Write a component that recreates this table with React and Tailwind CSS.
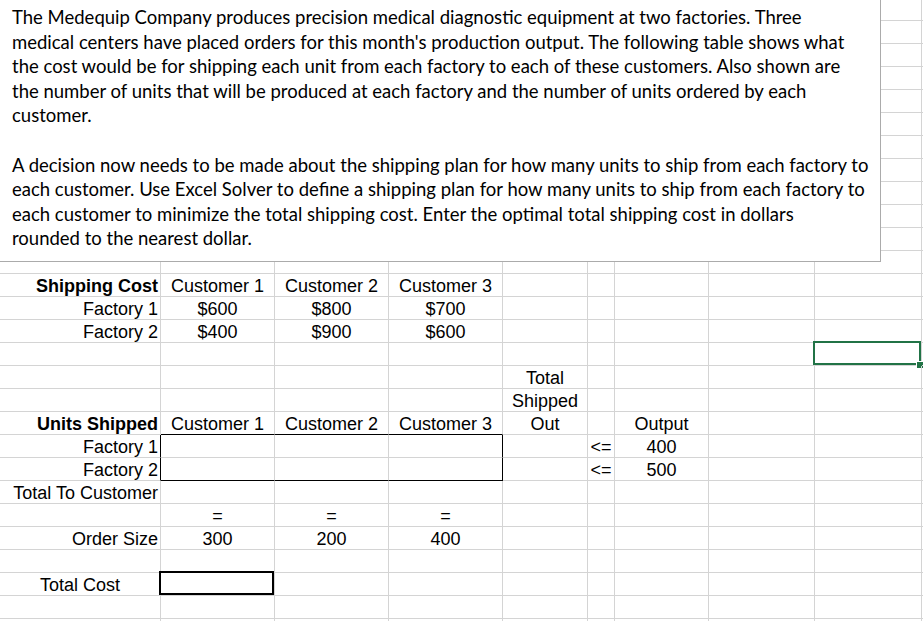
import React from 'react';

const ROWS = 28;
const NCOLS = 10;

const PROBLEM = [
  'The Medequip Company produces precision medical diagnostic equipment at two factories. Three',
  "medical centers have placed orders for this month's production output. The following table shows what",
  'the cost would be for shipping each unit from each factory to each of these customers. Also shown are',
  'the number of units that will be produced at each factory and the number of units ordered by each',
  'customer.',
  '',
  'A decision now needs to be made about the shipping plan for how many units to ship from each factory to',
  'each customer. Use Excel Solver to define a shipping plan for how many units to ship from each factory to',
  'each customer to minimize the total shipping cost. Enter the optimal total shipping cost in dollars',
  'rounded to the nearest dollar.',
];

// row -> { col: [text, align, bold] }
const CELLS = {
  12: { 0: ['Shipping Cost', 'r', true], 1: ['Customer 1', 'c'], 2: ['Customer 2', 'c'], 3: ['Customer 3', 'c'] },
  13: { 0: ['Factory 1', 'r'], 1: ['$600', 'c'], 2: ['$800', 'c'], 3: ['$700', 'c'] },
  14: { 0: ['Factory 2', 'r'], 1: ['$400', 'c'], 2: ['$900', 'c'], 3: ['$600', 'c'] },
  16: { 4: ['Total', 'c'] },
  17: { 4: ['Shipped', 'c'] },
  18: { 0: ['Units Shipped', 'r', true], 1: ['Customer 1', 'c'], 2: ['Customer 2', 'c'], 3: ['Customer 3', 'c'], 4: ['Out', 'c'], 6: ['Output', 'c'] },
  19: { 0: ['Factory 1', 'r'], 5: ['<=', 'c'], 6: ['400', 'c'] },
  20: { 0: ['Factory 2', 'r'], 5: ['<=', 'c'], 6: ['500', 'c'] },
  21: { 0: ['Total To Customer', 'r'] },
  22: { 1: ['=', 'c'], 2: ['=', 'c'], 3: ['=', 'c'] },
  23: { 0: ['Order Size', 'r'], 1: ['300', 'c'], 2: ['200', 'c'], 3: ['400', 'c'] },
  25: { 0: ['Total Cost', 'c'] },
};

// black outline round the units shipped block (B19:D20)
const blackRight = new Set(['19-0', '20-0', '19-3', '20-3']);
const blackBottom = new Set(['18-1', '18-2', '18-3', '20-1', '20-2', '20-3']);

function Cell({ r, c }) {
  const key = `${r}-${c}`;
  const data = CELLS[r]?.[c];
  const rightCls = blackRight.has(key) ? 'border-r-black' : 'border-r-[#d4d4d4]';
  const bottomCls = blackBottom.has(key) ? 'border-b-black' : 'border-b-[#d4d4d4]';
  let alignCls = 'justify-start';
  if (data?.[1] === 'r') alignCls = 'justify-end';
  if (data?.[1] === 'c') alignCls = 'justify-center';

  return (
    <div className={`relative flex items-end px-[2px] border-r border-b whitespace-nowrap ${rightCls} ${bottomCls} ${alignCls}`}>
      {data && (
        <span className={`leading-[20px] ${data[2] ? 'font-bold' : ''}`}>{data[0]}</span>
      )}
      {r === 25 && c === 1 && (
        <div className="absolute -left-[2px] -top-[2px] right-0 bottom-0 border-2 border-black" />
      )}
      {r === 15 && c === 8 && (
        <div className="absolute -left-[2px] -top-[2px] right-0 bottom-0 border-2 border-[#217346]">
          <div className="absolute -right-[4px] -bottom-[5px] w-[7px] h-[7px] bg-[#217346] border-l border-t border-white" />
        </div>
      )}
    </div>
  );
}

export default function App() {
  return (
    <div className="relative w-[923px] h-[621px] overflow-hidden bg-white text-black">
      <div className="font-['Liberation_Sans',Arial,sans-serif] text-[18px]">
        {Array.from({ length: ROWS }).map((_, r) => (
          <div
            key={r}
            className={`grid grid-cols-[161px_114px_114px_114px_85px_27px_94px_106px_107px_1fr] ${r === 0 ? 'h-[21px]' : 'h-[23px]'}`}
          >
            {Array.from({ length: NCOLS }).map((_, c) => (
              <Cell key={c} r={r} c={c} />
            ))}
          </div>
        ))}
      </div>

      {/* text box laid over the sheet */}
      <div className="absolute -left-[2px] -top-[2px] w-[883px] h-[264px] bg-white border border-[#ababab] pt-[6px] pl-[13px] font-['Lato','Open_Sans',sans-serif] text-[18.5px] leading-[24.6px] text-black">
        {PROBLEM.map((line, i) => (
          <div key={i} className="whitespace-nowrap h-[24.6px]">{line}</div>
        ))}
      </div>
    </div>
  );
}
